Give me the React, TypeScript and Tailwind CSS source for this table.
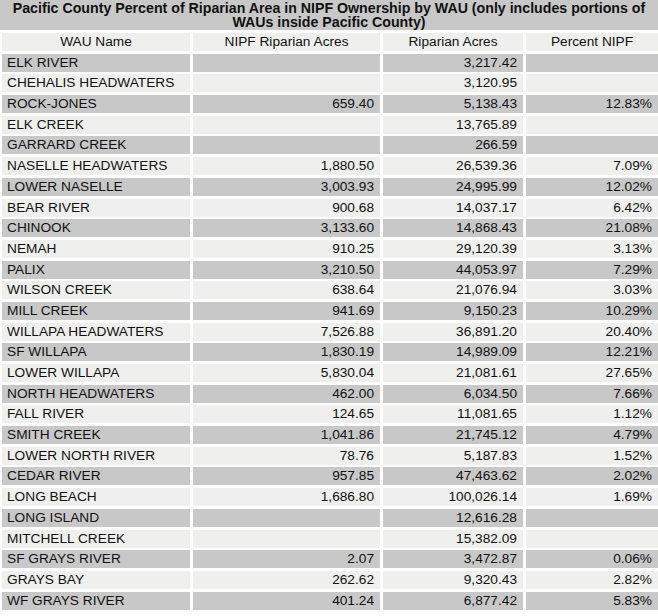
const rows: [string, string, string, string][] = [
  ["ELK RIVER", "", "3,217.42", ""],
  ["CHEHALIS HEADWATERS", "", "3,120.95", ""],
  ["ROCK-JONES", "659.40", "5,138.43", "12.83%"],
  ["ELK CREEK", "", "13,765.89", ""],
  ["GARRARD CREEK", "", "266.59", ""],
  ["NASELLE HEADWATERS", "1,880.50", "26,539.36", "7.09%"],
  ["LOWER NASELLE", "3,003.93", "24,995.99", "12.02%"],
  ["BEAR RIVER", "900.68", "14,037.17", "6.42%"],
  ["CHINOOK", "3,133.60", "14,868.43", "21.08%"],
  ["NEMAH", "910.25", "29,120.39", "3.13%"],
  ["PALIX", "3,210.50", "44,053.97", "7.29%"],
  ["WILSON CREEK", "638.64", "21,076.94", "3.03%"],
  ["MILL CREEK", "941.69", "9,150.23", "10.29%"],
  ["WILLAPA HEADWATERS", "7,526.88", "36,891.20", "20.40%"],
  ["SF WILLAPA", "1,830.19", "14,989.09", "12.21%"],
  ["LOWER WILLAPA", "5,830.04", "21,081.61", "27.65%"],
  ["NORTH HEADWATERS", "462.00", "6,034.50", "7.66%"],
  ["FALL RIVER", "124.65", "11,081.65", "1.12%"],
  ["SMITH CREEK", "1,041.86", "21,745.12", "4.79%"],
  ["LOWER NORTH RIVER", "78.76", "5,187.83", "1.52%"],
  ["CEDAR RIVER", "957.85", "47,463.62", "2.02%"],
  ["LONG BEACH", "1,686.80", "100,026.14", "1.69%"],
  ["LONG ISLAND", "", "12,616.28", ""],
  ["MITCHELL CREEK", "", "15,382.09", ""],
  ["SF GRAYS RIVER", "2.07", "3,472.87", "0.06%"],
  ["GRAYS BAY", "262.62", "9,320.43", "2.82%"],
  ["WF GRAYS RIVER", "401.24", "6,877.42", "5.83%"],
];

const headers = ["WAU Name", "NIPF Riparian Acres", "Riparian Acres", "Percent NIPF"];

export default function App() {
  return (
    <div className="w-[658px] h-[616px] bg-white overflow-hidden text-[#111] font-['Liberation_Sans',Arial,sans-serif] text-[13.7px]">
      <div className="h-[30px] bg-[#c8c8c8] flex items-center justify-center text-center font-bold text-[14.2px] leading-[14px] px-2">
        Pacific County Percent of Riparian Area in NIPF Ownership by WAU (only includes portions of WAUs inside Pacific County)
      </div>
      <div className="grid grid-cols-[188px_187px_140px_132px] auto-rows-[18px] gap-x-[3px] gap-y-[2.7px] pl-[2px] pt-[3px]">
        {headers.map((h) => (
          <div key={h} className="bg-[#eff0ed] flex items-center justify-center leading-[18px]">
            {h}
          </div>
        ))}
        {rows.map((r, i) => {
          const bg = i % 2 === 0 ? "bg-[#c8c8c8]" : "bg-[#eff0ed]";
          return r.map((c, j) => (
            <div
              key={`${i}-${j}`}
              className={`${bg} flex items-center leading-[18px] ${
                j === 0 ? "justify-start pl-[5px]" : "justify-end pr-[6px]"
              }`}
            >
              {c}
            </div>
          ));
        })}
      </div>
    </div>
  );
}
